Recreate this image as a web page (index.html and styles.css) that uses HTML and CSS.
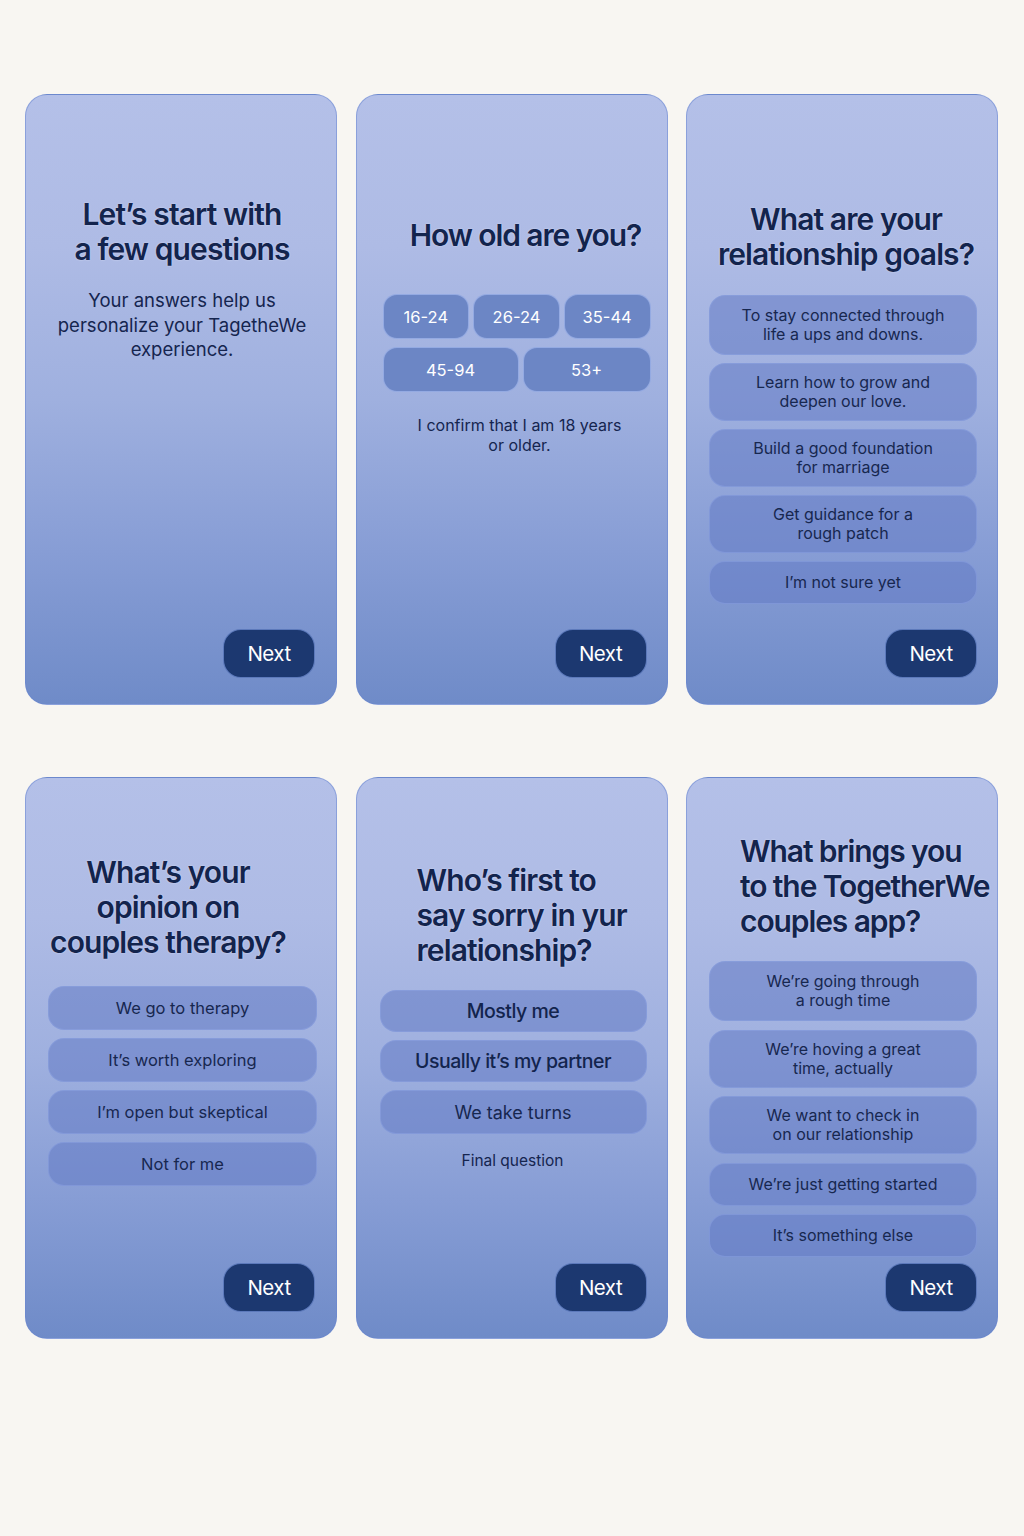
FILE: index.html
```html
<!DOCTYPE html>
<html lang="en">
<head>
<meta charset="utf-8">
<title>TogetherWe onboarding</title>
<link rel="stylesheet" href="styles.css">
</head>
<body>
<main class="board">
  <section class="card card-intro">
    <h1 class="title t-intro">Let’s start with<br>a few questions</h1>
    <p class="lead">Your answers help us<br>personalize your TagetheWe<br>experience.</p>
    <button class="next next-inset">Next</button>
  </section>

  <section class="card card-age">
    <h1 class="title t-age">How old are you?</h1>
    <div class="pills">
      <div class="pill-row">
        <span class="pill">16-24</span>
        <span class="pill">26-24</span>
        <span class="pill">35-44</span>
      </div>
      <div class="pill-row">
        <span class="pill pill-wide">45-94</span>
        <span class="pill">53+</span>
      </div>
    </div>
    <p class="confirm">I confirm that I am 18 years<br>or older.</p>
    <button class="next">Next</button>
  </section>

  <section class="card card-goals">
    <h1 class="title t-goals">What are your<br>relationship goals?</h1>
    <ul class="options opts-goals">
      <li class="opt tall">To stay connected through<br>life a ups and downs.</li>
      <li class="opt tall2">Learn how to grow and<br>deepen our love.</li>
      <li class="opt tall2">Build a good foundation<br>for marriage</li>
      <li class="opt tall2">Get guidance for a<br>rough patch</li>
      <li class="opt short">I’m not sure yet</li>
    </ul>
    <button class="next">Next</button>
  </section>

  <section class="card card-therapy">
    <h1 class="title t-therapy">What’s your<br>opinion on<br>couples therapy?</h1>
    <ul class="options opts-therapy">
      <li class="opt mid">We go to therapy</li>
      <li class="opt mid">It’s worth exploring</li>
      <li class="opt mid">I’m open but skeptical</li>
      <li class="opt mid">Not for me</li>
    </ul>
    <button class="next next-inset">Next</button>
  </section>

  <section class="card card-sorry">
    <h1 class="title t-sorry">Who’s first to<br>say sorry in yur<br>relationship?</h1>
    <ul class="options opts-sorry">
      <li class="opt big">Mostly me</li>
      <li class="opt big">Usually it’s my partner</li>
      <li class="opt medium">We take turns</li>
    </ul>
    <p class="final">Final question</p>
    <button class="next">Next</button>
  </section>

  <section class="card card-brings">
    <h1 class="title t-brings">What brings you<br>to the TogetherWe<br>couples app?</h1>
    <ul class="options opts-brings">
      <li class="opt tall">We’re going through<br>a rough time</li>
      <li class="opt tall2">We’re hoving a great<br>time, actually</li>
      <li class="opt tall3">We want to check in<br>on our relationship</li>
      <li class="opt short">We’re just getting started</li>
      <li class="opt short">It’s something else</li>
    </ul>
    <button class="next">Next</button>
  </section>
</main>
</body>
</html>
```

FILE: styles.css
```css
* { box-sizing: border-box; }

html, body {
  margin: 0;
  padding: 0;
  background: #f8f6f2;
}

body {
  font-family: Inter, "Noto Sans", "Liberation Sans", sans-serif;
  color: #15254f;
  width: 1024px;
  height: 1536px;
}

.board {
  display: grid;
  grid-template-columns: repeat(3, 312px);
  grid-template-rows: 611px 562px;
  column-gap: 18.5px;
  row-gap: 72px;
  padding: 94px 0 0 25px;
}

.card {
  display: flex;
  flex-direction: column;
  border-radius: 22px;
  border: 1px solid rgba(105, 135, 210, 0.55);
  background: linear-gradient(180deg, #b4c0e8 0%, #aebbe5 25%, #9fb0df 50%, #879dd5 75%, #6f8bc8 100%);
  padding: 0 20px 26px 22px;
}

.title {
  margin: 0;
  font-size: 30px;
  line-height: 35px;
  font-weight: 600;
  letter-spacing: -0.9px;
  color: #13244d;
  white-space: nowrap;
  text-shadow: 0 0 2px rgba(235, 240, 255, 0.7);
}

.t-intro { text-align: center; padding-top: 102px; }
.t-age { text-align: center; padding-top: 123px; padding-left: 26px; letter-spacing: -1.1px; }
.t-goals { text-align: center; padding-top: 107px; padding-left: 6px; }
.t-therapy { text-align: center; padding-top: 77px; padding-right: 22px; margin-left: -6px; }
.t-sorry { text-align: left; padding-top: 85px; padding-left: 38px; }
.t-brings { text-align: left; padding-top: 56px; padding-left: 31px; margin-right: -30px; letter-spacing: -1.1px; }

.lead {
  margin: 21px 0 0;
  text-align: center;
  font-size: 18.5px;
  line-height: 24.5px;
  color: #15254f;
}

/* age pills */
.pills {
  display: flex;
  flex-direction: column;
  gap: 8px;
  margin: 41px -4px 0 4px;
}

.pill-row {
  display: flex;
  gap: 4px;
}

.pill {
  flex: 1;
  height: 45px;
  display: flex;
  align-items: center;
  justify-content: center;
  border-radius: 14px;
  background: #6c86c5;
  border: 1px solid rgba(165, 185, 238, 0.7);
  color: #ffffff;
  font-size: 16.5px;
}

.pill-wide { flex: 0 0 136px; }

.confirm {
  margin: 23px 0 0;
  text-align: center;
  font-size: 16px;
  line-height: 20px;
  padding-left: 14px;
}

/* options */
.options {
  list-style: none;
  margin: 0;
  padding: 0;
  display: flex;
  flex-direction: column;
}

.opts-goals { margin-top: 23px; gap: 8px; }
.opts-therapy { margin-top: 26px; gap: 8px; margin-right: -1px; }
.opts-sorry { margin-top: 22px; gap: 8px; margin-left: 1px; }
.opts-brings { margin-top: 22px; gap: 8.5px; }

.opt {
  display: flex;
  align-items: center;
  justify-content: center;
  text-align: center;
  border-radius: 16px;
  background: rgba(98, 122, 196, 0.55);
  border: 1px solid rgba(140, 162, 226, 0.55);
  font-size: 16px;
  line-height: 19px;
  color: #17274f;
}

.opt.tall { height: 60px; }
.opt.tall2 { height: 58px; }
.opt.tall3 { height: 58px; }
.opt.short { height: 43px; }
.opt.mid { height: 44px; font-size: 16.5px; }
.opt.big { height: 42px; font-size: 19.5px; font-weight: 500; letter-spacing: -0.5px; color: #13244d; }
.opt.medium { height: 44px; font-size: 18px; }

.final {
  margin: 17px 0 0;
  text-align: center;
  font-size: 15.5px;
  line-height: 20px;
}

.next {
  margin-top: auto;
  align-self: flex-end;
  width: 92px;
  height: 49px;
  border-radius: 18px;
  border: 1px solid rgba(120, 150, 220, 0.7);
  background: #1c3870;
  color: #ffffff;
  font-family: Inter, "Noto Sans", "Liberation Sans", sans-serif;
  font-size: 20.5px;
  letter-spacing: -0.5px;
  padding: 0;
}

.next-inset { margin-right: 1px; }
```
